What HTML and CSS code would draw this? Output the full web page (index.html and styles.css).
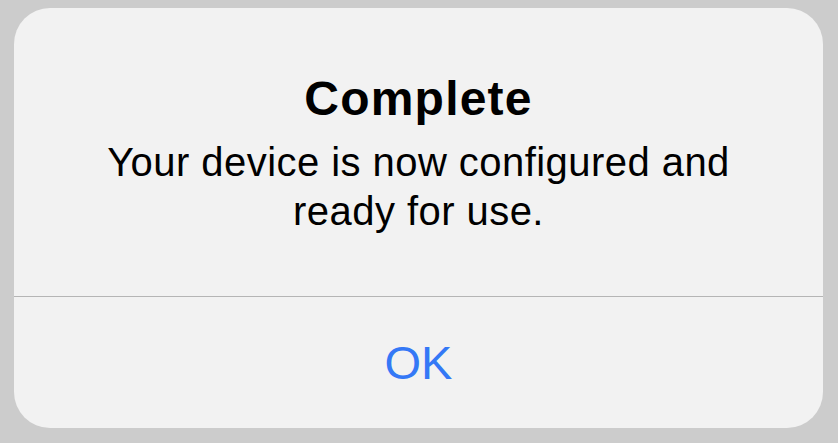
FILE: index.html
```html
<!DOCTYPE html>
<html lang="en">
<head>
<meta charset="utf-8">
<link rel="stylesheet" href="styles.css">
</head>
<body>
<div class="alert">
  <div class="alert-content">
    <h1 class="alert-title">Complete</h1>
    <p class="alert-message">Your device is now configured and<br>ready for use.</p>
  </div>
  <div class="alert-actions">
    <button class="alert-button">OK</button>
  </div>
</div>
</body>
</html>
```
FILE: styles.css
```css
html, body {
  margin: 0;
  padding: 0;
}
body {
  background: #cccccc;
  width: 838px;
  height: 443px;
  box-sizing: border-box;
  padding: 8px 15px 15px 14px;
  font-family: "Liberation Sans", Arial, sans-serif;
}
.alert {
  background: #f2f2f2;
  border-radius: 36px;
  height: 420px;
  display: flex;
  flex-direction: column;
  overflow: hidden;
}
.alert-content {
  height: 289px;
  box-sizing: border-box;
  padding-top: 66px;
  border-bottom: 1px solid #b5b5b5;
  text-align: center;
}
.alert-title {
  margin: 0;
  font-size: 48px;
  line-height: 50px;
  font-weight: 700;
  letter-spacing: 1.2px;
  color: #000;
}
.alert-message {
  margin: 14px 0 0;
  font-size: 40px;
  line-height: 49px;
  letter-spacing: 0.45px;
  color: #000;
}
.alert-actions {
  flex: 1;
  display: flex;
  align-items: center;
  justify-content: center;
}
.alert-button {
  border: 0;
  background: transparent;
  font-family: inherit;
  font-size: 47px;
  color: #3478f6;
  padding: 0;
  margin-top: 0;
}
```
